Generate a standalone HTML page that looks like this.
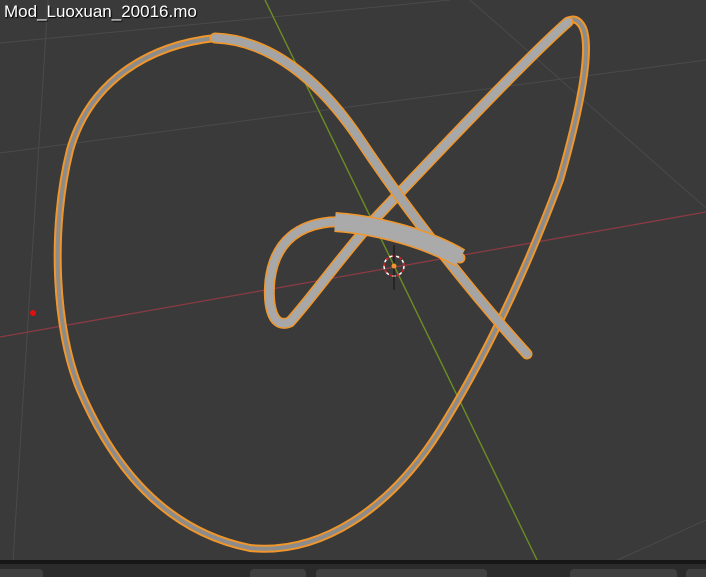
<!DOCTYPE html>
<html><head><style>
html,body{margin:0;padding:0;width:706px;height:577px;overflow:hidden;background:#3a3a3a;}
.t{position:absolute;left:4px;top:2px;color:#fff;font:17px "Liberation Sans",sans-serif;text-shadow:1px 1px 1px #000;}
</style></head><body>
<svg width="706" height="577" style="position:absolute;left:0;top:0">
<rect width="706" height="577" fill="#3a3a3a"/>
<g stroke="#4a4a4a" stroke-width="1" fill="none">
<line x1="0" y1="43" x2="450" y2="0"/>
<line x1="0" y1="153" x2="706" y2="60"/>
<line x1="48" y1="0" x2="12" y2="577"/>
<line x1="470" y1="0" x2="706" y2="208"/>
<line x1="580" y1="577" x2="706" y2="520"/>
</g>
<line x1="0" y1="337" x2="706" y2="212" stroke="#8a3a44" stroke-width="1.3"/>
<line x1="265" y1="0" x2="537" y2="560" stroke="#6a8e22" stroke-width="1.4"/>
<circle cx="33" cy="313" r="3" fill="#e01010"/>
<g fill="none" stroke-linecap="round" stroke-linejoin="round">
<path d="M215,38 C150,45 90,80 70,150 C50,230 55,330 80,390 C110,460 160,530 250,548 C320,555 390,510 440,430 C490,350 530,260 560,180 C580,110 592,50 583,28 C578,18 572,18 566,22" stroke="#f0962a" stroke-width="8"/>
<path d="M215,38 C150,45 90,80 70,150 C50,230 55,330 80,390 C110,460 160,530 250,548 C320,555 390,510 440,430 C490,350 530,260 560,180 C580,110 592,50 583,28 C578,18 572,18 566,22" stroke="#8c8c8c" stroke-width="4"/>
<path d="M568,22 C530,55 440,150 372,222 C340,258 310,300 290,322 C270,330 268,300 270,280 C275,240 300,225 330,222 C380,220 430,240 460,258" stroke="#f0962a" stroke-width="11"/>
<path d="M568,22 C530,55 440,150 372,222 C340,258 310,300 290,322 C270,330 268,300 270,280 C275,240 300,225 330,222 C380,220 430,240 460,258" stroke="#a8a8a8" stroke-width="8"/>
<path d="M215,38 C270,40 320,80 360,140 C400,200 460,280 527,354" stroke="#f0962a" stroke-width="11"/>
<path d="M215,38 C270,40 320,80 360,140 C400,200 460,280 527,354" stroke="#a4a4a4" stroke-width="8"/>
<path d="M335,222 C380,225 430,240 460,258" stroke="#f0962a" stroke-width="20" stroke-linecap="butt"/>
<path d="M335,222 C380,225 430,240 460,258" stroke="#aaa" stroke-width="17" stroke-linecap="butt"/>
</g>
<circle cx="394" cy="266" r="10" fill="none" stroke="#fff" stroke-width="1.5" stroke-dasharray="4 3"/>
<circle cx="394" cy="266" r="10" fill="none" stroke="#e02020" stroke-width="1.5" stroke-dasharray="3 4" stroke-dashoffset="4"/>
<line x1="394" y1="245" x2="394" y2="290" stroke="#111" stroke-width="1"/>
<circle cx="394" cy="266" r="2.5" fill="#f0962a"/>
<rect x="0" y="560" width="706" height="4" fill="#161616"/>
<rect x="0" y="564" width="706" height="13" fill="#2b2b2b"/>
<g fill="#3f3f3f">
<rect x="-5" y="569" width="48" height="12" rx="4"/>
<rect x="250" y="569" width="56" height="12" rx="4"/>
<rect x="316" y="569" width="171" height="12" rx="4"/>
<rect x="570" y="569" width="107" height="12" rx="4"/>
<rect x="686" y="569" width="25" height="12" rx="4"/>
</g>
</svg>
<div class="t">Mod_Luoxuan_20016.mo</div>
</body></html>
